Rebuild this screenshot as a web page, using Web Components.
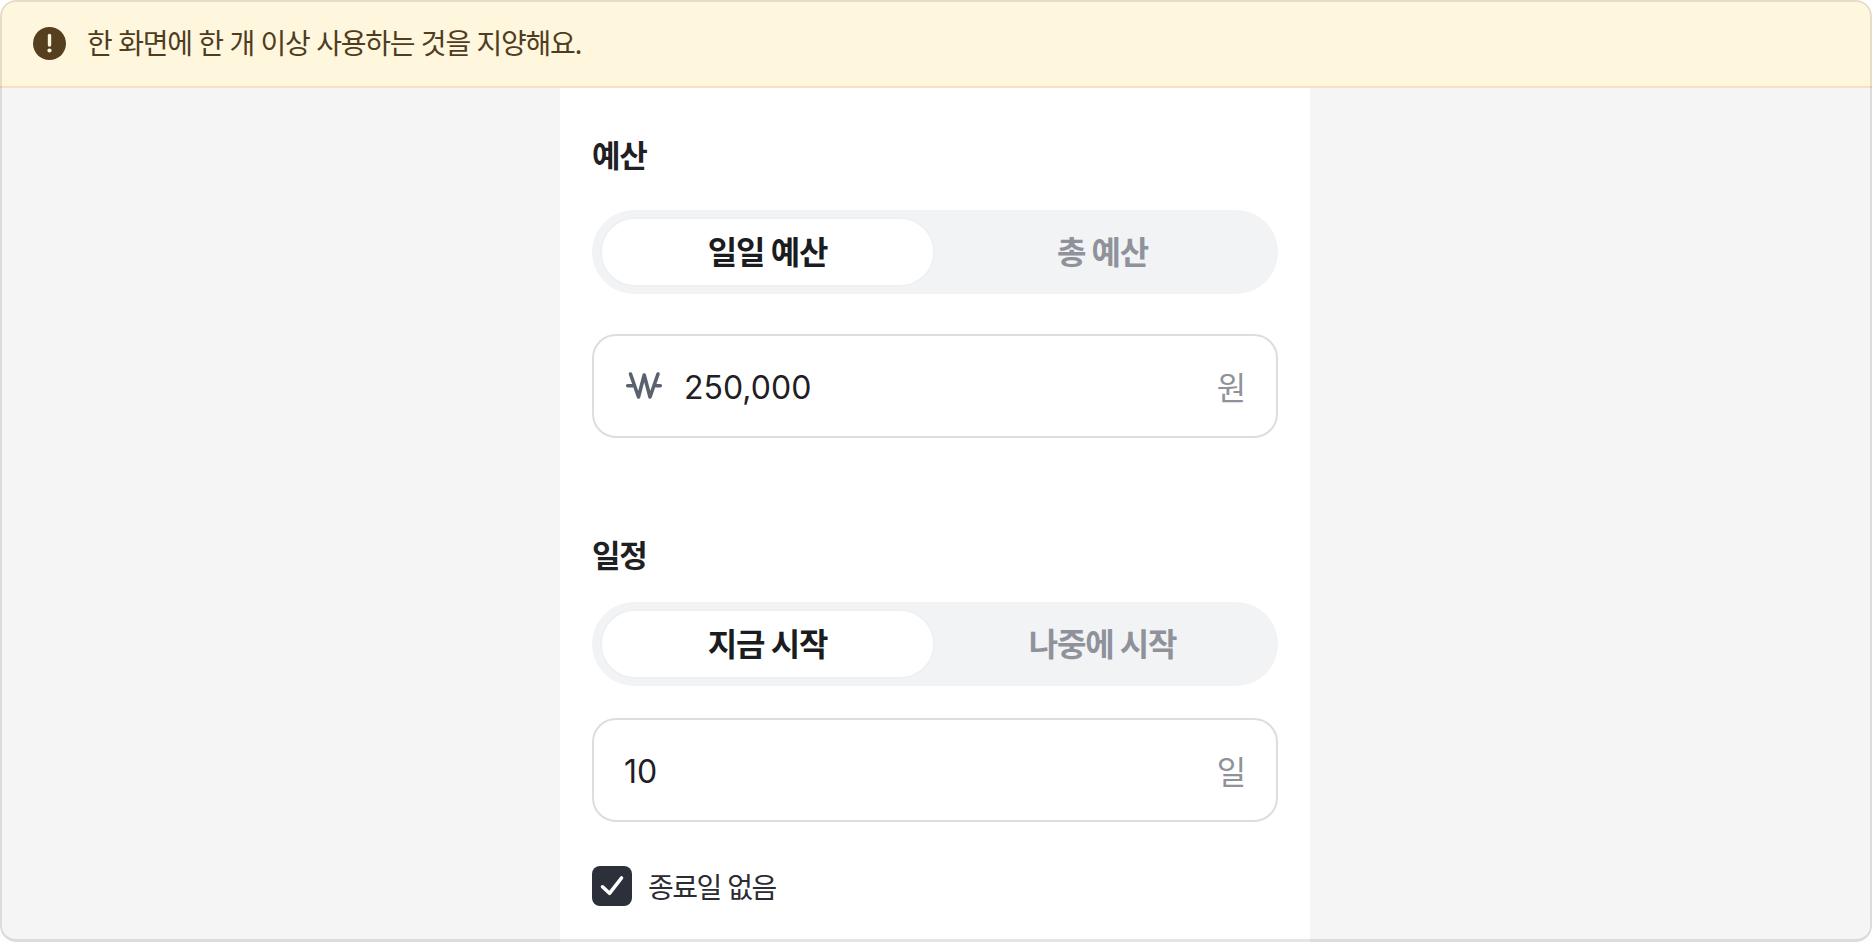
<!DOCTYPE html>
<html lang="ko">
<head>
<meta charset="utf-8">
<title>Budget</title>
<style>
  html, body {
    margin: 0;
    height: 100%;
    font-family: Inter, "Noto Sans CJK KR", sans-serif;
  }
</style>
</head>
<body>
<ad-frame>
  <ad-banner>한 화면에 한 개 이상 사용하는 것을 지양해요.</ad-banner>
  <ad-panel>
    <ad-section heading="예산" first>
      <ad-segment on="일일 예산" off="총 예산"></ad-segment>
      <ad-field value="250,000" unit="원" won style="margin-top: 40px"></ad-field>
    </ad-section>
    <ad-section heading="일정">
      <ad-segment on="지금 시작" off="나중에 시작"></ad-segment>
      <ad-field value="10" unit="일" style="margin-top: 32px"></ad-field>
      <ad-check style="margin-top: 44px">종료일 없음</ad-check>
    </ad-section>
  </ad-panel>
</ad-frame>

<script>
class Frame extends HTMLElement {
  constructor() {
    super();
    this.attachShadow({ mode: "open" });
    this.shadowRoot.innerHTML = `
      <style>
        :host {
          display: flex;
          flex-direction: column;
          position: relative;
          height: 942px;
          box-sizing: border-box;
          overflow: hidden;
          border-radius: 16px;
          background: #f5f5f5;
        }

        /* thin line drawn over the whole frame, it tints what is below */
        :host::after {
          content: "";
          position: absolute;
          inset: 0;
          border: 2px solid rgba(0, 0, 0, 0.1);
          border-bottom-width: 3px;
          border-radius: 16px;
          pointer-events: none;
        }
      </style>
      <slot></slot>
    `;
  }
}

class Banner extends HTMLElement {
  constructor() {
    super();
    this.attachShadow({ mode: "open" });
    this.shadowRoot.innerHTML = `
      <style>
        :host {
          display: flex;
          align-items: center;
          gap: 21px;
          height: 88px;
          flex: none;
          box-sizing: border-box;
          padding: 0 33px;
          background: #fff6de;
          border-bottom: 2px solid #fbdfc5;
          color: #4f3d1f;
          font-size: 28px;
          letter-spacing: -1.25px;
        }

        svg {
          flex: none;
          margin-top: 1px;
        }

        span {
          margin-bottom: 2px;
        }
      </style>
      <svg width="33" height="33" viewBox="0 0 33 33">
        <circle cx="16.5" cy="16.5" r="16.5" fill="#553f1e" />
        <path d="M16.5 8.5V18" stroke="#fff6de" stroke-width="3.4" stroke-linecap="round" />
        <circle cx="16.5" cy="23.5" r="2.1" fill="#fff6de" />
      </svg>
      <span><slot></slot></span>
    `;
  }
}

class Panel extends HTMLElement {
  constructor() {
    super();
    this.attachShadow({ mode: "open" });
    this.shadowRoot.innerHTML = `
      <style>
        :host {
          display: flex;
          flex-direction: column;
          flex: 1;
          align-self: center;
          width: 750px;
          margin-right: 2px;
          box-sizing: border-box;
          padding: 47px 32px 0;
          background: #fff;
        }
      </style>
      <slot></slot>
    `;
  }
}

class Section extends HTMLElement {
  constructor() {
    super();
    this.attachShadow({ mode: "open" });
    const gap = this.hasAttribute("first") ? 34 : 26;
    this.shadowRoot.innerHTML = `
      <style>
        :host {
          display: block;
        }

        :host(:not([first])) {
          margin-top: 97px;
        }

        h2 {
          margin: 0 0 ${gap}px;
          padding-top: 1px;
          font-size: 31px;
          line-height: 40px;
          letter-spacing: -1.2px;
          font-weight: 700;
          color: #1f2024;
        }
      </style>
      <h2>${this.getAttribute("heading")}</h2>
      <slot></slot>
    `;
  }
}

class Segment extends HTMLElement {
  constructor() {
    super();
    this.attachShadow({ mode: "open" });
    this.shadowRoot.innerHTML = `
      <style>
        :host {
          display: grid;
          grid-template-columns: 1fr 1fr;
          height: 84px;
          box-sizing: border-box;
          padding: 7px 8px;
          border-radius: 42px;
          background: #f2f3f5;
          font-size: 32px;
          letter-spacing: -1.2px;
          font-weight: 700;
        }

        div {
          display: flex;
          align-items: center;
          justify-content: center;
          padding-bottom: 4px;
          border: 2px solid transparent;
          border-radius: 35px;
          color: #8f929b;
        }

        .on {
          background: #fff;
          border-color: #eff0f2;
          color: #1b1c20;
        }
      </style>
      <div class="on">${this.getAttribute("on")}</div>
      <div>${this.getAttribute("off")}</div>
    `;
  }
}

const wonSvg = `
  <svg width="40" height="32" viewBox="0 0 40 32" fill="none">
    <path
      d="M6.5 4L14.5 27L20.2 5L26 27L34 4M3.7 15.7H10M30 15.7H36.3"
      stroke="#5a6270"
      stroke-width="3.6"
      stroke-linecap="round"
      stroke-linejoin="round"
    />
  </svg>
`;

class Field extends HTMLElement {
  constructor() {
    super();
    this.attachShadow({ mode: "open" });
    this.shadowRoot.innerHTML = `
      <style>
        :host {
          display: flex;
          align-items: center;
          gap: 20px;
          height: 104px;
          box-sizing: border-box;
          padding: 0 31px 0 30px;
          border: 2px solid #dcdde2;
          border-radius: 24px;
          background: #fff;
          font-size: 32px;
          color: #1f2024;
        }

        .value {
          flex: 1;
          margin-top: 2px;
        }

        .unit {
          letter-spacing: -1.2px;
          color: #8f929b;
        }
      </style>
      ${this.hasAttribute("won") ? wonSvg : ""}
      <span class="value">${this.getAttribute("value")}</span>
      <span class="unit">${this.getAttribute("unit")}</span>
    `;
  }
}

class Check extends HTMLElement {
  constructor() {
    super();
    this.attachShadow({ mode: "open" });
    this.shadowRoot.innerHTML = `
      <style>
        :host {
          display: flex;
          align-items: center;
          gap: 16px;
          font-size: 28px;
          letter-spacing: -1.5px;
          color: #2a2c32;
        }

        svg {
          flex: none;
        }
      </style>
      <svg width="40" height="40" viewBox="0 0 40 40">
        <rect width="40" height="40" rx="8" fill="#2b303b" />
        <path
          d="M10.5 20.8L17.5 27.3L29.5 12"
          fill="none"
          stroke="#fff"
          stroke-width="3.6"
          stroke-linecap="round"
          stroke-linejoin="round"
        />
      </svg>
      <span><slot></slot></span>
    `;
  }
}

customElements.define("ad-frame", Frame);
customElements.define("ad-banner", Banner);
customElements.define("ad-panel", Panel);
customElements.define("ad-section", Section);
customElements.define("ad-segment", Segment);
customElements.define("ad-field", Field);
customElements.define("ad-check", Check);
</script>
</body>
</html>
